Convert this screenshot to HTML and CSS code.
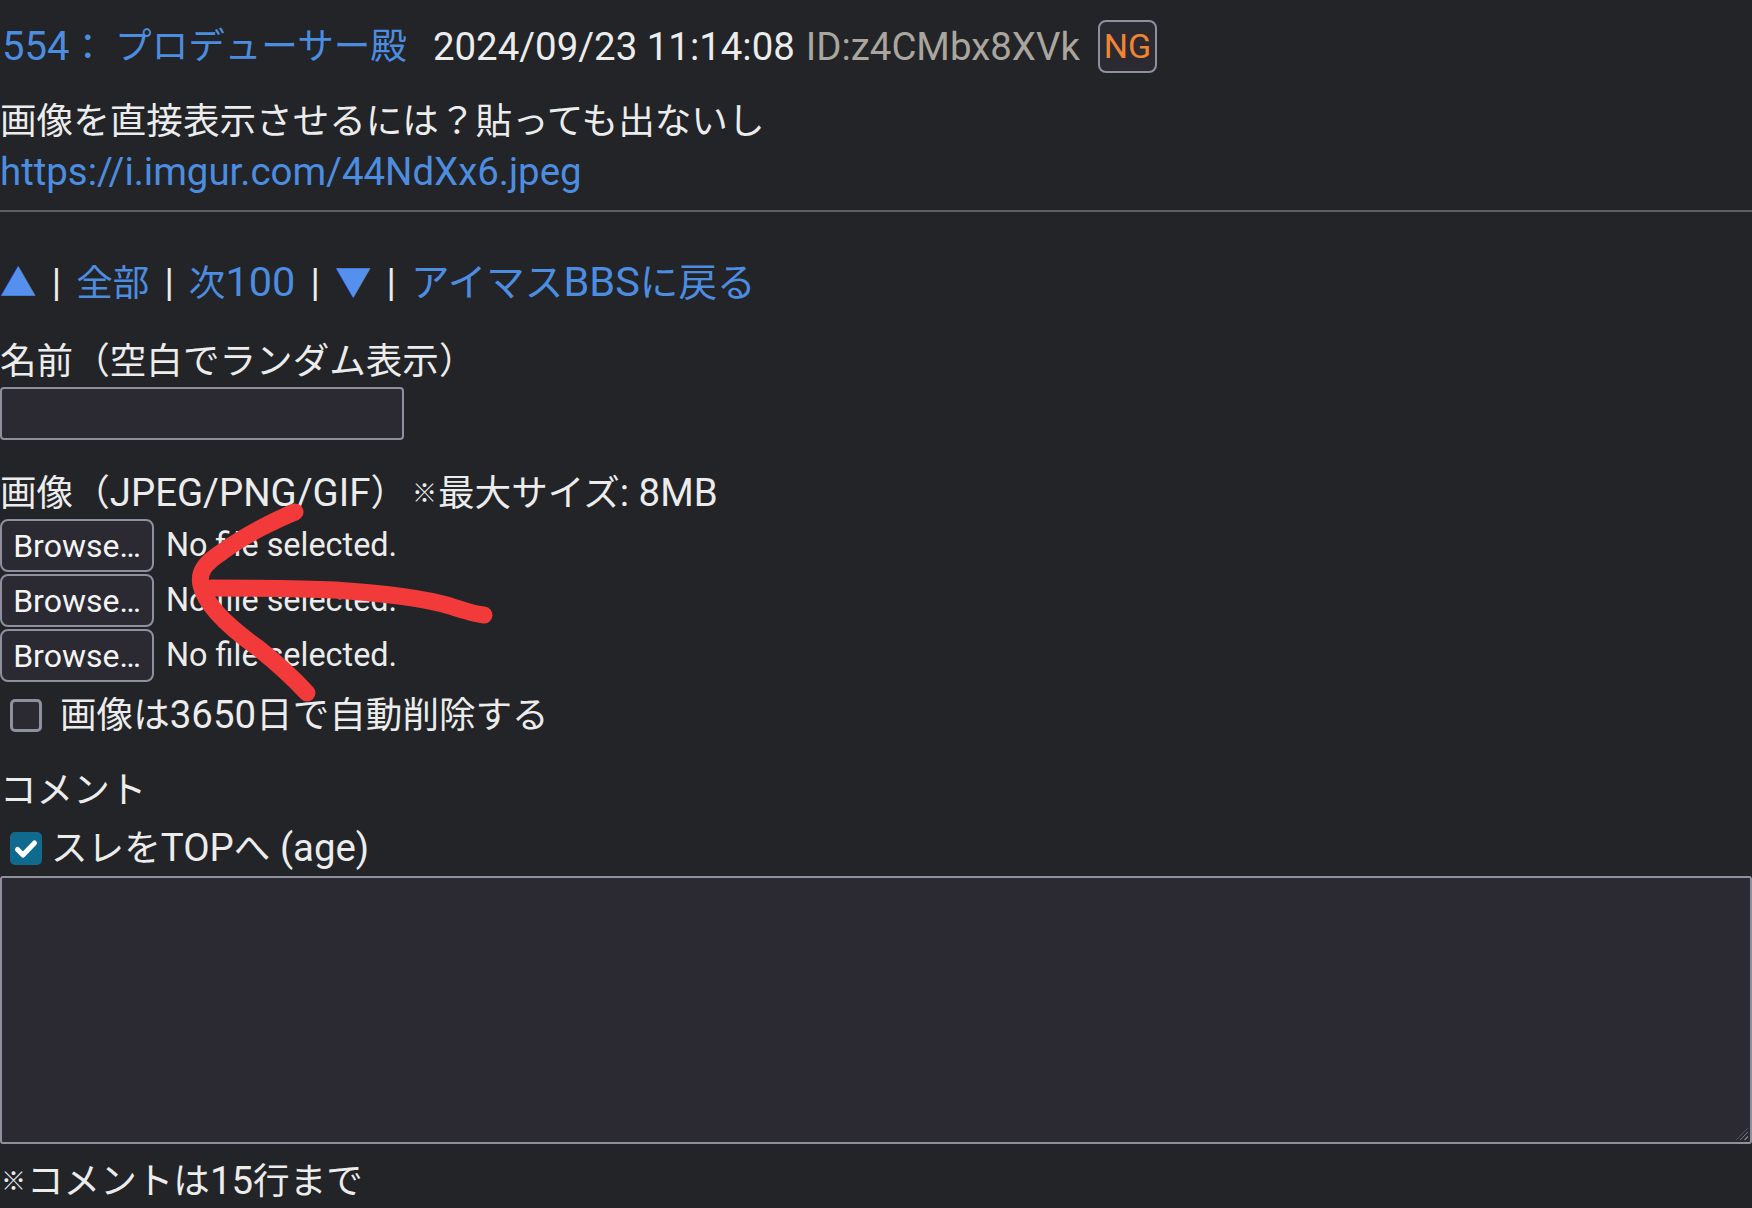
FILE: index.html
```html
<!DOCTYPE html>
<html lang="ja">

<head>
	<meta charset="UTF-8">
	<meta name="viewport" content="width=device-width, initial-scale=1.0">
	<title>アイマスBBS</title>
	<link rel="stylesheet" href="styles.css">
</head>

<body>

	<div class="post">
		<div class="post-head">
			<a class="num" href="#"><span class="en">554</span>：</a>
			<a class="name" href="#">プロデューサー殿</a>
			<span class="date en">2024/09/23 11:14:08</span>
			<span class="uid en">ID:z4CMbx8XVk</span>
			<span class="ng">NG</span>
		</div>
		<div class="post-body">
			画像を直接表示させるには？貼っても出ないし<br>
			<a class="en" href="#">https://i.imgur.com/44NdXx6.jpeg</a>
		</div>
	</div>

	<hr class="rule">

	<nav class="pager">
		<a class="tri" href="#">▲</a> <span class="sep en">|</span>
		<a href="#">全部</a> <span class="sep en">|</span>
		<a href="#">次<span class="en">100</span></a> <span class="sep en">|</span>
		<a class="tri" href="#">▼</a> <span class="sep en">|</span>
		<a class="back" href="#">アイマス<span class="en">BBS</span>に戻る</a>
	</nav>

	<form class="reply">
		<div class="label name-label">名前（空白でランダム表示）</div>
		<div class="textbox"></div>

		<div class="label img-label">画像（<span class="en">JPEG/PNG/GIF</span>）<span class="kome">※</span>最大サイズ<span class="en">: 8MB</span></div>
		<div class="files">
			<div class="file"><button type="button" class="browse">Browse…</button><span>No file selected.</span></div>
			<div class="file"><button type="button" class="browse">Browse…</button><span>No file selected.</span></div>
			<div class="file"><button type="button" class="browse">Browse…</button><span>No file selected.</span></div>
		</div>

		<label class="check autodel">
			<span class="box"></span>
			<span>画像は<span class="en">3650</span>日で自動削除する</span>
		</label>

		<div class="label comment-label">コメント</div>
		<label class="check age">
			<span class="box checked">
				<svg viewBox="0 0 28 28" width="28" height="28"><path d="M5.5 14.5l5.5 5.5 11.5-12" fill="none" stroke="#fff" stroke-width="5" stroke-linecap="round" stroke-linejoin="round"/></svg>
			</span>
			<span>スレを<span class="en">TOP</span>へ<span class="en"> (age)</span></span>
		</label>
		<div class="comment-box">
			<span class="grip"></span>
		</div>
		<div class="note"><span class="kome">※</span>コメントは<span class="en">15</span>行まで</div>
	</form>

	<!-- hand drawn red arrow over the screenshot -->
	<svg class="scribble" width="1752" height="1208" viewBox="0 0 1752 1208">
		<path d="M295 512 C275 520 245 535 222 552 C205 563 198 572 201 585 C205 605 230 628 258 648 C278 664 295 680 307 693" fill="none" stroke="#f23a3a" stroke-width="17" stroke-linecap="round" stroke-linejoin="round"/>
		<path d="M212 588 C260 588 300 588 335 590 C380 593 420 597 450 606 C465 611 475 614 484 615" fill="none" stroke="#f23a3a" stroke-width="17" stroke-linecap="round" stroke-linejoin="round"/>
	</svg>

</body>

</html>
```

FILE: styles.css
```css
body {
	margin: 0;
	padding: 20px 0 0 0;
	background-color: #222428;
	color: #ececec;
	font-family: Roboto, "Noto Sans CJK JP", sans-serif;
	font-size: 36.6px;
	line-height: 51px;
	overflow: hidden;
	height: 1188px;
	position: relative;
}

a {
	color: #4d8de0;
	text-decoration: none;
}

/* latin runs render a bit larger than the kana/kanji,
   line-height 0 keeps them from stretching the line box */
.en {
	font-size: 38.4px;
	line-height: 0;
}

.kome {
	font-size: 25px;
	line-height: 0;
	vertical-align: 4px;
	margin: 0 1px;
}

.img-label .kome {
	margin-left: 5px;
}

.post-head {
	display: flex;
	align-items: center;
	height: 53px;
	padding-left: 2px;
	white-space: nowrap;
}

.post-head .en {
	line-height: 51px;
}

.post-head .num .en {
	font-size: 40px;
}

.post-head .num {
	margin-right: 9px;
}

.post-head .date {
	margin-left: 26px;
}

.post-head .uid {
	margin-left: 11px;
	color: #aaa69d;
}

.ng {
	margin-left: 18px;
	height: 53px;
	width: 59px;
	box-sizing: border-box;
	border: 2px solid #8f8f9d;
	border-radius: 8px;
	background-color: #2b2a33;
	color: #f08532;
	font-size: 34px;
	display: flex;
	align-items: center;
	justify-content: center;
}

.post-body {
	margin-top: 23px;
}

.rule {
	margin: 12px 0 0 0;
	border: none;
	height: 2px;
	background-color: #5f6064;
}

.pager {
	margin-top: 46px;
	white-space: nowrap;
}

.pager .en {
	font-size: 41.5px;
}

.pager .sep {
	font-size: 38.4px;
	margin: 0 6px;
}

.pager .tri {
	color: #5590ee;
}

.pager .back {
	font-size: 38.6px;
	line-height: 0;
}

.label {
	white-space: nowrap;
}

.name-label {
	margin-top: 27px;
}

.textbox {
	width: 404px;
	height: 53px;
	box-sizing: border-box;
	border: 2px solid #8f8f9d;
	border-radius: 4px;
	background-color: #2b2a33;
}

.img-label {
	margin-top: 28px;
}

.files {
	display: flex;
	flex-direction: column;
	gap: 2px;
}

.file {
	display: flex;
	align-items: center;
	gap: 12px;
	height: 53px;
	font-size: 32.4px;
}

.browse {
	height: 53px;
	width: 154px;
	box-sizing: border-box;
	border: 2px solid #8f8f9d;
	border-radius: 8px;
	background-color: #2b2a33;
	color: #f4f4f4;
	font-family: Roboto, sans-serif;
	font-size: 32px;
	padding: 0;
}

.check {
	display: flex;
	align-items: center;
	white-space: nowrap;
}

.box {
	box-sizing: border-box;
	display: flex;
	align-items: center;
	justify-content: center;
	flex: none;
}

.autodel {
	margin-top: 8px;
}

.autodel .box {
	width: 32px;
	height: 33px;
	margin: 0 18px 0 10px;
	border: 3px solid #8f8f9d;
	border-radius: 5px;
	background-color: #2b2a33;
}

.comment-label {
	margin-top: 24px;
}

.age {
	margin-top: 7px;
}

.age .box {
	width: 32px;
	height: 33px;
	margin: 0 9px 0 10px;
	border-radius: 5px;
	background-color: #0f6a8e;
}

.age .box svg {
	width: 28px;
	height: 28px;
}

.comment-box {
	position: relative;
	height: 268px;
	box-sizing: border-box;
	border: 2px solid #8f8f9d;
	border-radius: 3px;
	background-color: #2b2a33;
	margin-top: 2px;
}

.grip {
	position: absolute;
	right: 2px;
	bottom: 2px;
	width: 12px;
	height: 12px;
	background: repeating-linear-gradient(135deg, transparent 0 2px, #77777f 2px 3px);
	clip-path: polygon(100% 0, 100% 100%, 0 100%);
}

.note {
	margin-top: 12px;
	white-space: nowrap;
}

.scribble {
	position: absolute;
	left: 0;
	top: 0;
	pointer-events: none;
}
```
